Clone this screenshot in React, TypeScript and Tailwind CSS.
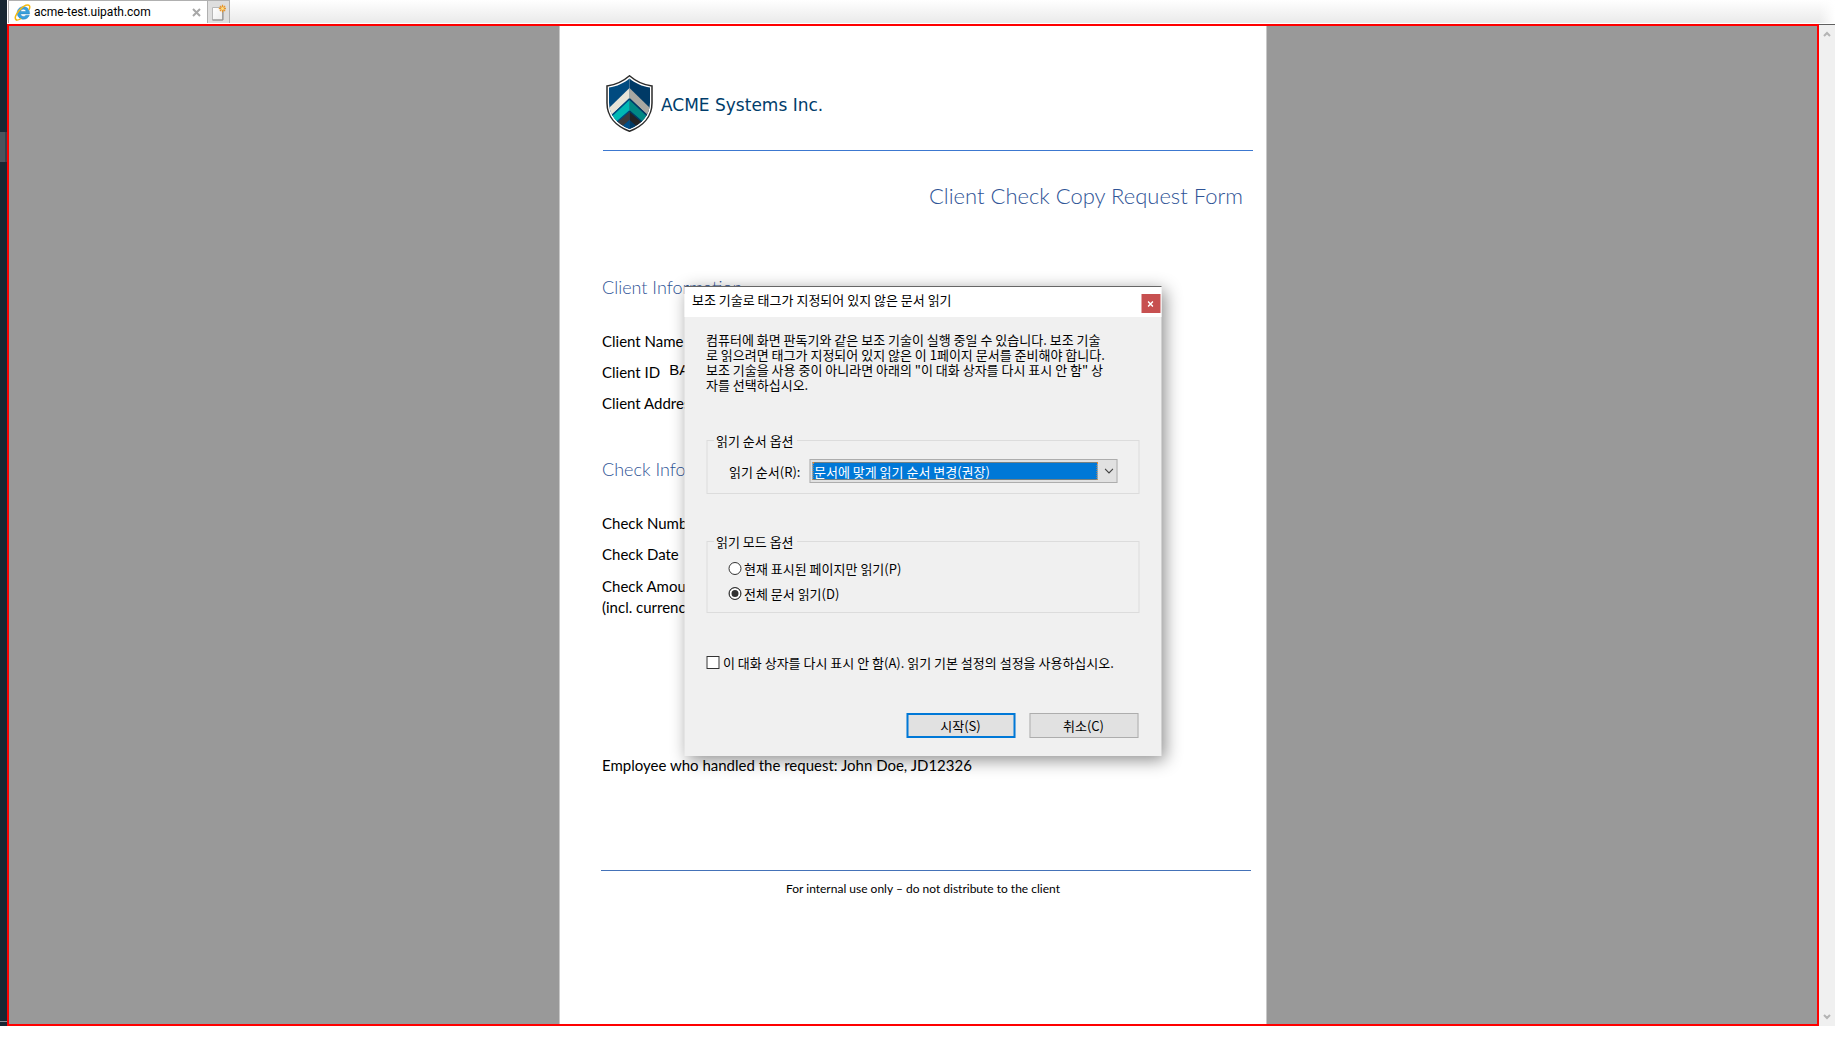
import React from "react";

function IeIcon() {
  return (
    <svg viewBox="0 0 17 17" className="h-[17px] w-[17px] shrink-0" aria-hidden="true">
      <path d="M15.300 11.2c-1 2.600-3 4-5.800 4-3.600 0-6.300-2.700-6.300-6.300S5.700 2.700 9.400 2.700c3.800 0 6.300 2.600 6.200 7.200H6.600c.2 1.500 1.300 2.500 3 2.500 1 0 1.800-.4 2.300-1.200zM6.600 7.500h5.400c-.2-1.400-1.200-2.300-2.600-2.300s-2.500.9-2.800 2.300z" fill="#3aa0dc" stroke="#1f78b8" strokeWidth=".4" />
      <path d="M2.300 15.900C.2 14.600 1.500 10.600 5 6.700 8.500 2.800 12.600.4 14.800 1.200c1.300.6 1.200 2.400.3 4.300" fill="none" stroke="#f5b90f" strokeWidth="1.500" strokeLinecap="round" />
      <path d="M2.300 15.900c1 .5 2.700-.1 4.400-1.200" fill="none" stroke="#f5b90f" strokeWidth="1.200" strokeLinecap="round" />
    </svg>
  );
}

function NewTabIcon() {
  return (
    <svg viewBox="0 0 14 17" className="h-[17px] w-[14px]" aria-hidden="true">
      <defs>
        <linearGradient id="sheet" x1="0" y1="0" x2="1" y2="1">
          <stop offset="0" stopColor="#fff" />
          <stop offset="1" stopColor="#ececec" />
        </linearGradient>
      </defs>
      <path d="M.5 3.500h10v12.500H.5z" fill="url(#sheet)" stroke="#b8b8b8" />
      <path d="M.5 16h10.500V4" fill="none" stroke="#8a8a8a" />
      <path d="M10.500 .8v7.400M6.800 4.500h7.400M7.900 1.900l5.200 5.200M13.100 1.900L7.900 7.100" stroke="#e8962a" strokeWidth="1.300" />
      <circle cx="10.500" cy="4.500" r="1.500" fill="#ffdc80" />
    </svg>
  );
}

function Shield() {
  return (
    <svg viewBox="0 0 47 57" className="h-[57px] w-[47px] shrink-0" aria-hidden="true">
      <defs>
        <clipPath id="shield-inner">
          <path d="M23.500 3.500C18 8 11 11.500 3 12.500v15C3 40 11 49 23.500 54 36 49 44 40 44 27.500v-15C36 11.500 29 8 23.500 3.500z" />
        </clipPath>
      </defs>
      <path d="M23.500.8C17.500 6 10 10 1 11v17c0 13 8.500 23 22.500 28.300C37.500 51 46 41 46 28V11C37 10 29.500 6 23.500.8z" fill="#fff" stroke="#2b2b2b" strokeWidth="1.500" />
      <g clipPath="url(#shield-inner)">
        <path d="M0 0h23.500v57H0z" fill="#004b80" />
        <path d="M23.500 0H47v57H23.500z" fill="#003a66" />
        <path d="M23.500 13L0 36v9l23.500-22z" fill="#e6e4d8" />
        <path d="M23.500 13L47 36v9L23.500 23z" fill="#a8a8a2" />
        <path d="M23.500 24L0 46v10l23.500-20z" fill="#00b8b4" />
        <path d="M23.500 24L47 46v10l-23.500-20z" fill="#008784" />
        <path d="M23.500 36L5 52l5 5 13.500-12z" fill="#3b3b3d" />
        <path d="M23.500 36L42 52l-5 5-13.500-12z" fill="#232325" />
        <path d="M23.500 24L0 46M23.500 36L5 52" stroke="#004b80" strokeWidth="1.500" />
        <path d="M23.500 24L47 46M23.500 36L42 52" stroke="#003a66" strokeWidth="1.500" />
        <path d="M23.500 45L14 54l9.500 3z" fill="#00508a" />
        <path d="M23.500 45l9.500 9-9.500 3z" fill="#003a66" />
      </g>
    </svg>
  );
}

function TabBar() {
  return (
    <header className="flex h-6 pb-px pl-px">
      <div className="flex w-[200px] items-center gap-[3px] border-x border-t border-[#b0b0b0] bg-white px-[5px] font-[Roboto,sans-serif]">
        <IeIcon />
        <span className="flex-1 text-[12px] leading-5 text-black">acme-test.uipath.com</span>
        <button aria-label="Close tab" className="flex h-3 w-3 items-center justify-center">
          <svg viewBox="0 0 9 9" className="h-[9px] w-[9px]">
            <path d="M1 1l7 7M8 1L1 8" stroke="#a8a8a8" strokeWidth="2" />
          </svg>
        </button>
      </div>
      <button aria-label="New tab" className="flex w-[22px] items-center justify-center border-r border-t border-[#b0b0b0] bg-[#dedede]">
        <NewTabIcon />
      </button>
      <div className="flex-1 bg-linear-to-b from-white to-[#ececec] to-90%">
        <div className="ml-auto h-full w-4 bg-linear-to-r from-transparent to-white" />
      </div>
    </header>
  );
}

function DocumentPage() {
  return (
    <main className="mx-auto min-h-[998px] w-[708px] border-x border-[#c8c8c8] bg-white pl-[42px] pr-[13px] font-[Lato,sans-serif] text-[15px] leading-[31px] text-black">
      <div className="ml-px flex h-[125px] items-start gap-2 border-b border-[#3c78d0] pl-[3px] pt-[49px]">
        <Shield />
        <span className="mt-[15px] font-['DejaVu_Sans',sans-serif] text-[17px] text-[#003d6b]">ACME Systems Inc.</span>
      </div>
      <h1 className="mt-[29px] pr-[10px] text-right text-[22px] font-light text-[#2f5496]">Client Check Copy Request Form</h1>
      <h2 className="mt-[61px] text-[18px] font-light text-[#2f5496]">Client Information</h2>
      <div className="mt-[23px]">
        <p>Client Name</p>
        <p className="flex gap-[9px]">
          Client ID <span className="-mt-[3px] font-['Liberation_Sans',sans-serif]">BA</span>
        </p>
        <p>Client Address</p>
      </div>
      <h2 className="mt-[35px] text-[18px] font-light text-[#2f5496]">Check Information</h2>
      <div className="mt-[23px]">
        <p>Check Number</p>
        <p>Check Date</p>
        <p className="mt-[6px] leading-[21px]">
          Check Amount
          <br />
          (incl. currency)
        </p>
      </div>
      <p className="mt-[132px]">Employee who handled the request: John Doe, JD12326</p>
      <footer className="-ml-px mr-[2px] mt-[89px] border-t border-[#4472b8] pr-[6px] pt-[2px] text-center text-[12px]">
        For internal use only – do not distribute to the client
      </footer>
    </main>
  );
}

function Scrollbar() {
  return (
    <div className="flex w-4 flex-col items-center justify-between border-t border-[#606060] bg-[#f0f0f0] py-[5px]">
      <button aria-label="Scroll up">
        <svg viewBox="0 0 8 8" className="h-2 w-2"><path d="M1 6l3-3 3 3" fill="none" stroke="#b4b4b4" strokeWidth="2" /></svg>
      </button>
      <button aria-label="Scroll down">
        <svg viewBox="0 0 8 8" className="h-2 w-2"><path d="M1 2l3 3 3-3" fill="none" stroke="#b4b4b4" strokeWidth="2" /></svg>
      </button>
    </div>
  );
}

const radioClass =
  "h-[13px] w-[13px] appearance-none rounded-full border border-[#333] bg-white checked:bg-[#333] checked:shadow-[inset_0_0_0_2px_#fff]";

function ReadingDialog() {
  return (
    <div
      role="dialog"
      aria-labelledby="dialog-title"
      className="absolute left-1/2 top-[286px] ml-px w-[477px] -translate-x-1/2 border-t border-[#666] bg-[#f0f0f0] font-['Noto_Sans_CJK_KR',sans-serif] text-[13px] leading-[15px] text-black shadow-[3px_4px_16px_rgba(0,0,0,0.45)]"
    >
      <div className="flex h-[30px] items-start justify-between bg-white pl-2 pr-px">
        <h2 id="dialog-title" className="mt-[5px]">보조 기술로 태그가 지정되어 있지 않은 문서 읽기</h2>
        <button aria-label="닫기" className="mt-[7px] flex h-[19px] w-[19px] items-center justify-center bg-[#c75050]">
          <svg viewBox="0 0 6 6" className="h-[6px] w-[6px]"><path d="M.5 .5l5 5M5.500 .5l-5 5" stroke="#fff" strokeWidth="1.500" /></svg>
        </button>
      </div>
      <form className="px-[22px] pb-[18px] pt-[15px]" onSubmit={(e) => e.preventDefault()}>
        <p className="whitespace-nowrap">
          컴퓨터에 화면 판독기와 같은 보조 기술이 실행 중일 수 있습니다. 보조 기술
          <br />
          로 읽으려면 태그가 지정되어 있지 않은 이 1페이지 문서를 준비해야 합니다.
          <br />
          보조 기술을 사용 중이 아니라면 아래의 "이 대화 상자를 다시 표시 안 함" 상
          <br />
          자를 선택하십시오.
        </p>
        <fieldset className="mt-[41px] h-[61px] border border-[#dcdcdc] pl-[22px]">
          <legend className="-ml-4 px-[3px]">읽기 순서 옵션</legend>
          <div className="mt-[11px] flex items-center">
            <label htmlFor="order" className="w-[80px]">읽기 순서(R):</label>
            <div className="flex h-6 w-[308px] items-center border border-[#adadad] bg-[#e1e1e1] pl-[2px]">
              <select id="order" className="h-[18px] w-[285px] appearance-none bg-[#0078d7] pl-[2px] leading-[15px] text-white outline-1 -outline-offset-1 outline-dotted outline-[#e88a30]">
                <option>문서에 맞게 읽기 순서 변경(권장)</option>
              </select>
              <svg viewBox="0 0 9 6" className="ml-[7px] h-[6px] w-[9px]" aria-hidden="true"><path d="M.5 .8l4 4 4-4" fill="none" stroke="#444" strokeWidth="1.200" /></svg>
            </div>
          </div>
        </fieldset>
        <fieldset className="mt-10 h-[79px] border border-[#dcdcdc] pl-[21px]">
          <legend className="-ml-[15px] px-[3px]">읽기 모드 옵션</legend>
          <div className="mt-3 flex flex-col gap-[10px]">
            <label className="flex items-center gap-[3px]">
              <input type="radio" name="mode" className={radioClass} />
              현재 표시된 페이지만 읽기(P)
            </label>
            <label className="flex items-center gap-[3px]">
              <input type="radio" name="mode" defaultChecked className={radioClass} />
              전체 문서 읽기(D)
            </label>
          </div>
        </fieldset>
        <label className="mt-[42px] flex items-center gap-1 whitespace-nowrap">
          <input type="checkbox" className="h-[13px] w-[13px] appearance-none border border-[#333] bg-white" />
          이 대화 상자를 다시 표시 안 함(A). 읽기 기본 설정의 설정을 사용하십시오.
        </label>
        <div className="mt-[43px] flex justify-end gap-[14px] pr-px">
          <button type="submit" className="h-[25px] w-[109px] border-2 border-[#0078d7] bg-[#e1e1e1]">시작(S)</button>
          <button type="button" className="h-[25px] w-[109px] border border-[#adadad] bg-[#e1e1e1]">취소(C)</button>
        </div>
      </form>
    </div>
  );
}

export default function App() {
  return (
    <div className="relative min-h-screen bg-white">
      <div className="flex">
        <div className="flex w-[7px] flex-col bg-[#182733]">
          <div className="mt-[132px] h-[30px] w-full border-r-2 border-[#343f49] bg-[#4a545d]" />
          <div className="mb-1 mt-auto h-px bg-[#8a9096]" />
        </div>
        <div className="min-w-0 flex-1 pr-2">
          <TabBar />
          <div className="flex">
            <div className="min-w-0 flex-1 border-2 border-[#ff0000] bg-[#999]">
              <DocumentPage />
            </div>
            <Scrollbar />
          </div>
        </div>
      </div>
      <ReadingDialog />
    </div>
  );
}
